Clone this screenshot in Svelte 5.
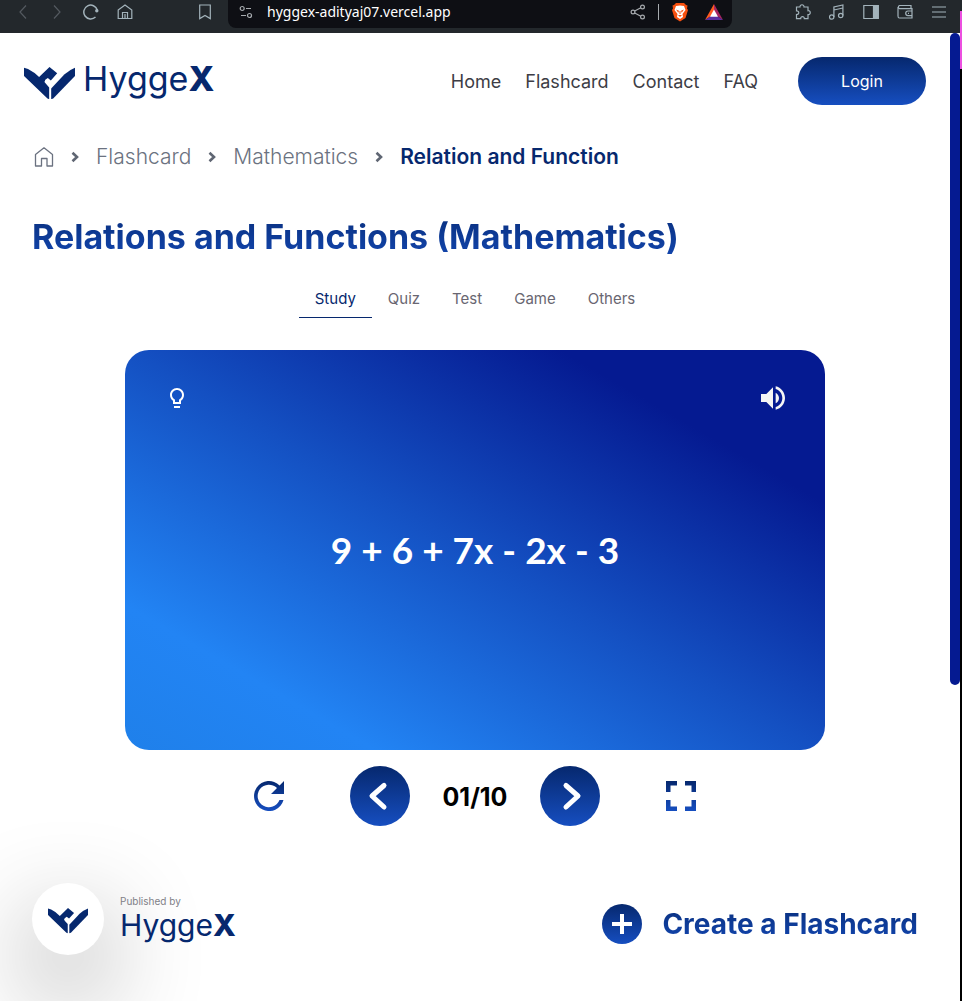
<script>
  const links = ['Home', 'Flashcard', 'Contact', 'FAQ'];
  const crumbs = ['Flashcard', 'Mathematics'];
  const tabs = ['Study', 'Quiz', 'Test', 'Game', 'Others'];
  let active = $state('Study');
  let index = $state(1);
  const total = 10;
  const counter = $derived(`${String(index).padStart(2, '0')}/${total}`);
</script>

{#snippet mark()}
  <svg class="mark" viewBox="0 0 152 96" fill="#06286e" aria-hidden="true">
    <path d="M0 2L12 6Q30 15 45 30L76 0L99 19L80 40L71 33Q61 38 61 45L66 51L75 61V96L70 94L0 27Z" />
    <path d="M152 2V27L87 94L81 96V64L120 22Q136 8 152 2Z" />
  </svg>
{/snippet}

{#snippet chevron()}
  <svg class="chev" width="8" height="12" viewBox="0 0 8 12" fill="none" stroke="#5f6673" stroke-width="2.6" aria-hidden="true"><path d="M1.500 1.800L6 6L1.500 10.200" /></svg>
{/snippet}

<div class="browser">
  <div class="toolbar">
    <div class="group">
      <button aria-label="Back" class="dim"><svg width="16" height="16" viewBox="0 0 16 16"><path d="M11 1.500L5 8L11 14.500" /></svg></button>
      <button aria-label="Forward" class="dim"><svg width="16" height="16" viewBox="0 0 16 16"><path d="M5 1.500L11 8L5 14.500" /></svg></button>
      <button aria-label="Reload"><svg width="16" height="16" viewBox="0 0 16 16"><path d="M12.500 13A6.900 6.900 0 1 1 14.300 6" stroke-width="1.500" /><circle cx="13.800" cy="6.700" r="1.700" fill="currentColor" stroke="none" /></svg></button>
      <button aria-label="Browser home"><svg width="16" height="16" viewBox="0 0 16 16"><path d="M1.200 6L8 1L14.800 6V14.500H1.200ZM5.500 14V8.500H10.500V14M8 10V14" /></svg></button>
    </div>
    <button aria-label="Bookmark" class="bookmark"><svg width="16" height="16" viewBox="0 0 16 16"><path d="M2.700 1H13.300V14.600L8 11.500L2.700 14.600Z" /></svg></button>
    <div class="address">
      <svg width="14" height="14" viewBox="0 0 14 14" aria-hidden="true"><circle cx="3.200" cy="3.500" r="2" /><path d="M7 3.500H12M2 10.500H7" /><circle cx="10.500" cy="10.500" r="2" /></svg>
      <span class="url">hyggex-adityaj07.vercel.app</span>
      <svg width="16" height="16" viewBox="0 0 16 16" aria-hidden="true"><circle cx="12.500" cy="3" r="1.900" /><circle cx="3" cy="8" r="1.900" /><circle cx="12.500" cy="13" r="1.900" /><path d="M4.700 7L10.800 3.800M4.700 9L10.800 12.200" /></svg>
      <i class="divider"></i>
      <svg class="brave" width="18" height="20" viewBox="0 0 18 20" aria-hidden="true"><path d="M5 1H13L15 3L16.500 3.500L16 6.500L17 8L14.500 16L9 19.500L3.500 16L1 8L2 6.500L1.500 3.500L3 3Z" fill="#f7500f" stroke="none" /><path d="M5 4L9 3.400L13 4L14.500 8L11.500 12L12 15L9 17L6 15L6.500 12L3.500 8Z" fill="#fff" stroke="none" /><path d="M5 7.500L8 8.800L7.300 10.800ZM13 7.500L10 8.800L10.700 10.800ZM7 13H11L9 15ZM8.500 9H9.500V12H8.500Z" fill="#f7500f" stroke="none" /></svg>
      <svg class="bat" width="18" height="16" viewBox="0 0 18 16" aria-hidden="true"><path d="M9 0L0 16L9 10Z" fill="#ff5a1f" stroke="none" /><path d="M9 0L18 16L9 10Z" fill="#a62560" stroke="none" /><path d="M0 16H18L9 10Z" fill="#5b2fa0" stroke="none" /><path d="M9 5.500L13 12.700H5Z" fill="#fff" stroke="none" /></svg>
    </div>
    <div class="group tools">
      <button aria-label="Extensions"><svg width="16" height="16" viewBox="0 0 16 16"><path d="M1.500 3H5C4.600 0 9.400 0 9 3H13V6.700C16 6.300 16 11 13 10.600V14.600H9.300C9.500 12 5.500 12 5.700 14.600H1.500V10.500C4.500 10.700 4.500 6.600 1.500 6.800Z" /></svg></button>
      <button aria-label="Media"><svg width="16" height="16" viewBox="0 0 16 16"><circle cx="2.700" cy="13" r="2.200" /><circle cx="11.700" cy="11.500" r="2.200" /><path d="M4.900 13V3L13.900 1V11.500M4.900 6L13.900 4" /></svg></button>
      <button aria-label="Side panel"><svg width="16" height="16" viewBox="0 0 16 16"><path d="M.8 1.500H15.200V14.500H.8Z" /><path d="M10.500 1.500H15.200V14.500H10.500Z" fill="currentColor" /></svg></button>
      <button aria-label="Wallet"><svg width="16" height="16" viewBox="0 0 16 16"><path d="M14 4.500V1.500H2.500A1.700 1.700 0 0 0 2.500 4.700H15V14H2.500Q1 14 1 12V3M15 7H11A2.300 2.300 0 0 0 11 11.600H15M11 9.300H12" /></svg></button>
      <button aria-label="Menu"><svg width="16" height="16" viewBox="0 0 16 16"><path d="M1 3H15M1 8H15M1 13H15" /></svg></button>
    </div>
  </div>

  <div class="viewport">
    <div class="page">
      <header>
        <a class="logo" href="#home" aria-label="HyggeX">{@render mark()}<span class="word">Hygge<b>X</b></span></a>
        <nav>
          {#each links as link}<a href="#{link.toLowerCase()}">{link}</a>{/each}
          <button class="login">Login</button>
        </nav>
      </header>

      <main>
        <nav class="crumbs" aria-label="Breadcrumb">
          <a href="#home" aria-label="Home"><svg width="20" height="20" viewBox="0 0 20 20" fill="none" stroke="#6b7280" stroke-width="1.300" stroke-linejoin="round" aria-hidden="true"><path d="M1.500 7.500L10 .8L18.500 7.500V19H13V11.500H7.500V19H1.500Z" /></svg></a>
          {#each crumbs as crumb}{@render chevron()}<a href="#{crumb.toLowerCase()}">{crumb}</a>{/each}
          {@render chevron()}<strong>Relation and Function</strong>
        </nav>

        <h1>Relations and Functions (Mathematics)</h1>

        <div class="tabs" role="tablist">
          {#each tabs as tab}
            <button role="tab" class:active={tab === active} aria-selected={tab === active} onclick={() => (active = tab)}>{tab}</button>
          {/each}
        </div>

        <section class="card">
          <div class="card-tools">
            <button aria-label="Hint"><svg width="24" height="24" viewBox="0 0 24 24" fill="#fff"><path d="M9 20h6v2H9zM12 2C8.140 2 5 5.140 5 9c0 2.380 1.190 4.470 3 5.740V18h8v-3.260c1.810-1.270 3-3.360 3-5.740 0-3.860-3.140-7-7-7zm2.850 11.100l-.85.6V16h-4v-2.300l-.85-.6C7.800 12.160 7 10.630 7 9c0-2.760 2.240-5 5-5s5 2.240 5 5c0 1.630-.8 3.160-2.150 4.100z" /></svg></button>
            <button aria-label="Read aloud"><svg width="32" height="32" viewBox="0 0 24 24" fill="#f5f5f5"><path d="M3 9v6h4l5 5V4L7 9H3zm13.500 3c0-1.770-1.020-3.290-2.500-4.030v8.050c1.480-.73 2.500-2.250 2.500-4.020zM14 3.230v2.060c2.890.86 5 3.540 5 6.710s-2.110 5.850-5 6.710v2.060c4.010-.91 7-4.490 7-8.770s-2.990-7.860-7-8.770z" /></svg></button>
          </div>
          <p>9 + 6 + 7x - 2x - 3</p>
        </section>

        <div class="controls">
          <button aria-label="Restart"><svg width="30" height="30" viewBox="0 0 30 30"><defs><linearGradient id="ink" gradientUnits="userSpaceOnUse" x1="0" y1="0" x2="0" y2="30"><stop stop-color="#06286e" /><stop offset="1" stop-color="#164ec0" /></linearGradient></defs><path d="M25.600 4.400A15 15 0 1 0 29.500 19H25.500A11.300 11.300 0 1 1 23 7L17 13H30V0Z" fill="url(#ink)" /></svg></button>
          <div class="pager">
            <button class="round" aria-label="Previous card" onclick={() => (index = Math.max(1, index - 1))}><svg width="60" height="60" viewBox="0 0 60 60"><path d="M34 19.500L22 30L34 41" /></svg></button>
            <output>{counter}</output>
            <button class="round" aria-label="Next card" onclick={() => (index = Math.min(total, index + 1))}><svg width="60" height="60" viewBox="0 0 60 60"><path d="M26 19.500L38 30L26 41" /></svg></button>
          </div>
          <button aria-label="Full screen"><svg width="30" height="30" viewBox="0 0 30 30"><path d="M0 0H11V4.500H4.500V11H0ZM19 0H30V11H25.500V4.500H19ZM0 19H4.500V25.500H11V30H0ZM25.500 19H30V30H19V25.500H25.500Z" fill="url(#ink)" /></svg></button>
        </div>
      </main>

      <footer>
        <div class="publisher">
          <div class="badge">{@render mark()}</div>
          <div class="by"><small>Published by</small><span class="word">Hygge<b>X</b></span></div>
        </div>
        <a class="create" href="#create">
          <svg width="40" height="40" viewBox="0 0 40 40" aria-hidden="true"><defs><linearGradient id="disc" x1="0" y1="0" x2="0" y2="1"><stop stop-color="#06286e" /><stop offset="1" stop-color="#164ec0" /></linearGradient></defs><circle cx="20" cy="20" r="20" fill="url(#disc)" /><path d="M18 10H22V18H30V22H22V30H18V22H10V18H18Z" fill="#fff" /></svg>
          <span>Create a Flashcard</span>
        </a>
      </footer>
    </div>
    <div class="track"><div class="thumb"></div></div>
  </div>
  <div class="edge"></div>
</div>

<style>
  :global(body) { margin: 0; background: #fff; }
  .browser {
    display: grid;
    grid-template-columns: minmax(0, 1fr) 2px;
    grid-template-rows: 33px 1fr;
    min-height: 100vh;
    font-family: Inter, sans-serif;
  }
  button { padding: 0; border: 0; background: none; font: inherit; cursor: pointer; }
  a { color: inherit; text-decoration: none; }
  svg { display: block; flex: none; }

  .toolbar { grid-column: 1; display: flex; align-items: flex-start; background: #23282c; color: #a3b3bb; }
  .toolbar svg { fill: none; stroke: currentColor; stroke-width: 1.2; }
  .group { display: flex; gap: 18px; padding: 4px 0 0 15px; }
  .group .dim { color: #545a60; }
  .bookmark { margin: 4px 15px 0 64px; color: #a3b3bb; }
  .group button { color: inherit; }
  .address {
    display: flex; flex: 1; align-items: center; gap: 12px; height: 24px; padding: 0 9px 4px 11px;
    max-width: 484px; border-radius: 0 0 8px 8px; background: #0e0f14; color: #a7abaf;
  }
  .url { flex: 1; padding-left: 2px; color: #fff; font: 14px/20px "Noto Sans", sans-serif; }
  .divider { width: 1px; height: 16px; background: #a7abaf; }
  .brave { margin-right: 4px; }
  .tools { margin-left: auto; padding: 4px 13px 0 0; }
  .edge { grid-column: 2; grid-row: 1 / 3; background: linear-gradient(#23282c 11px, #ec4fe0 11px 69px, #000 69px); }

  .viewport { grid-column: 1; display: grid; grid-template-columns: minmax(0, 1fr) 10px; }
  .thumb { height: 652px; border-radius: 5px; background: #051a91; }
  .page { display: flex; flex-direction: column; overflow: hidden; }

  header { display: flex; justify-content: space-between; align-items: center; padding: 24px 24px 0; }
  .logo { display: flex; align-items: center; gap: 8px; }
  .logo .mark { width: 51px; margin-top: 4px; }
  .logo .word { margin-bottom: 5px; }
  .word { color: #06286e; font: 34px/40px Inter, sans-serif; }
  .word b { font-weight: 800; }
  header nav { display: flex; align-items: center; gap: 24px; color: #3d3d45; font-size: 18px; line-height: 24px; }
  header nav a { padding-top: 2px; }
  .login {
    width: 128px; height: 48px; margin-left: 16px; border-radius: 24px;
    background: linear-gradient(#06286e, #164ec0); color: #fff; font-size: 16px;
  }

  main { display: flex; flex-direction: column; padding: 0 32px; }
  .crumbs { display: flex; align-items: center; gap: 17px; margin-top: 40px; padding-left: 2px; color: #6b7280; font-size: 21px; font-weight: 300; line-height: 24px; }
  .crumbs strong { color: #06286e; font-weight: 600; }
  h1 {
    align-self: flex-start; margin: 32px 0 0; padding: 16px 0; font-size: 34px; line-height: 40px; font-weight: 700;
    background: linear-gradient(#06286e, #164ec0); background-clip: text; color: transparent;
  }
  .tabs { display: flex; justify-content: center; margin-top: 8px; }
  .tabs button { height: 37px; padding: 0 16px; border-bottom: 1px solid transparent; color: #696671; font-size: 15px; font-weight: 400; line-height: 20px; }
  .tabs .active { border-color: #06286e; color: #06286e; }

  .card {
    display: grid; grid-template-rows: 96px 1fr 96px; align-self: center; width: 100%; max-width: 700px; height: 400px;
    margin-top: 32px; border-radius: 24px;
    background: linear-gradient(210deg, #051a91 0 19%, #1450c2 50%, #2284f4 82%, #1f80ea 100%); color: #fff;
  }
  .card-tools { display: flex; justify-content: space-between; align-items: center; padding: 0 36px 0 40px; }
  .card p { align-self: center; margin: 0; text-align: center; font: 700 37px/48px Lato, sans-serif; }

  .controls { display: flex; justify-content: center; align-items: center; gap: 66px; margin-top: 16px; }
  .pager { display: flex; align-items: center; gap: 32px; }
  .pager output { min-width: 66px; padding-top: 2px; text-align: center; font-size: 25px; font-weight: 700; line-height: 32px; }
  .round { border-radius: 50%; background: linear-gradient(#06286e, #164ec0); }
  .round svg { fill: none; stroke: #fff; stroke-width: 5; stroke-linecap: round; stroke-linejoin: round; }

  footer { display: flex; justify-content: space-between; align-items: center; margin-top: 57px; padding: 0 32px 46px; }
  .publisher { display: flex; align-items: center; gap: 16px; }
  .badge {
    display: grid; place-items: center; box-sizing: border-box; width: 72px; height: 72px; padding-top: 4px;
    border-radius: 50%; background: #fff; box-shadow: 0 36px 100px rgba(0, 0, 0, 0.45);
  }
  .badge .mark { width: 40px; }
  .by { display: flex; flex-direction: column; }
  .by small { color: #808087; font-size: 10px; line-height: 12px; }
  .by .word { font-size: 30px; line-height: 36px; }
  .create { display: flex; align-items: center; gap: 20px; padding-top: 10px; font-size: 28px; font-weight: 700; line-height: 40px; }
  .create span { padding: 8px 0; background: linear-gradient(#06286e, #164ec0); background-clip: text; color: transparent; }
</style>
